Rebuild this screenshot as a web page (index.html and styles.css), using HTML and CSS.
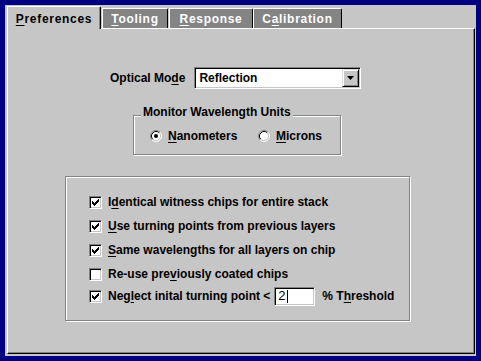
FILE: index.html
```html
<!DOCTYPE html>
<html lang="en">
<head>
    <meta charset="UTF-8">
    <meta name="viewport" content="width=device-width, initial-scale=1.0">
    <title>Preferences</title>
    <link rel="stylesheet" href="styles.css">
</head>
<body>
    <div class="window">
        <div class="tabs">
            <div class="tab active tab-pref"><u>P</u>references</div>
            <div class="tab tab-tool"><u>T</u>ooling</div>
            <div class="tab tab-resp"><u>R</u>esponse</div>
            <div class="tab tab-cal">C<u>a</u>libration</div>
        </div>

        <div class="panel">
            <div class="mode-row">
                <span class="mode-label">Optical Mo<u>d</u>e</span>
                <div class="select">
                    <span class="select-text">Reflection</span>
                    <span class="drop-btn">
                        <svg width="7" height="4" viewBox="0 0 7 4"><path d="M0 0h7L3.5 4z" fill="#000"/></svg>
                    </span>
                </div>
            </div>

            <div class="group units">
                <span class="legend">Monitor Wavelength Units</span>
                <div class="radio-row">
                    <div class="radio radio-nm">
                        <svg width="12" height="12" viewBox="0 0 12 12">
                            <circle cx="6" cy="6" r="5" fill="#fff"/>
                            <path d="M2.11 9.89A5.5 5.5 0 0 1 9.89 2.11" fill="none" stroke="#848484"/>
                            <path d="M9.89 2.11A5.5 5.5 0 0 1 2.11 9.89" fill="none" stroke="#fff"/>
                            <path d="M2.82 9.18A4.5 4.5 0 0 1 9.18 2.82" fill="none" stroke="#000"/>
                            <path d="M9.18 2.82A4.5 4.5 0 0 1 2.82 9.18" fill="none" stroke="#c6c6c6"/>
                            <circle cx="6" cy="6" r="2" fill="#000"/>
                        </svg>
                        <span><u>N</u>anometers</span>
                    </div>
                    <div class="radio">
                        <svg width="12" height="12" viewBox="0 0 12 12">
                            <circle cx="6" cy="6" r="5" fill="#fff"/>
                            <path d="M2.11 9.89A5.5 5.5 0 0 1 9.89 2.11" fill="none" stroke="#848484"/>
                            <path d="M9.89 2.11A5.5 5.5 0 0 1 2.11 9.89" fill="none" stroke="#fff"/>
                            <path d="M2.82 9.18A4.5 4.5 0 0 1 9.18 2.82" fill="none" stroke="#000"/>
                            <path d="M9.18 2.82A4.5 4.5 0 0 1 2.82 9.18" fill="none" stroke="#c6c6c6"/>
                        </svg>
                        <span><u>M</u>icrons</span>
                    </div>
                </div>
            </div>

            <div class="group options">
                <div class="check-row">
                    <span class="checkbox"><svg width="7" height="7" viewBox="0 0 7 7"><path d="M0 2h1v3H0zM1 3h1v3H1zM2 4h1v3H2zM3 3h1v3H3zM4 2h1v3H4zM5 1h1v3H5zM6 0h1v3H6z" fill="#000"/></svg></span>
                    <span>I<u>d</u>entical witness chips for entire stack</span>
                </div>
                <div class="check-row">
                    <span class="checkbox"><svg width="7" height="7" viewBox="0 0 7 7"><path d="M0 2h1v3H0zM1 3h1v3H1zM2 4h1v3H2zM3 3h1v3H3zM4 2h1v3H4zM5 1h1v3H5zM6 0h1v3H6z" fill="#000"/></svg></span>
                    <span><u>U</u>se turning points from previous layers</span>
                </div>
                <div class="check-row">
                    <span class="checkbox"><svg width="7" height="7" viewBox="0 0 7 7"><path d="M0 2h1v3H0zM1 3h1v3H1zM2 4h1v3H2zM3 3h1v3H3zM4 2h1v3H4zM5 1h1v3H5zM6 0h1v3H6z" fill="#000"/></svg></span>
                    <span><u>S</u>ame wavelengths for all layers on chip</span>
                </div>
                <div class="check-row">
                    <span class="checkbox"></span>
                    <span>Re-use pre<u>v</u>iously coated chips</span>
                </div>
                <div class="check-row row-last">
                    <span class="checkbox"><svg width="7" height="7" viewBox="0 0 7 7"><path d="M0 2h1v3H0zM1 3h1v3H1zM2 4h1v3H2zM3 3h1v3H3zM4 2h1v3H4zM5 1h1v3H5zM6 0h1v3H6z" fill="#000"/></svg></span>
                    <span>Neg<u>l</u>ect inital turning point &lt;</span>
                    <div class="textbox"><span class="value">2</span><span class="caret"></span></div>
                    <span class="threshold">% T<u>h</u>reshold</span>
                </div>
            </div>
        </div>
    </div>
</body>
</html>
```

FILE: styles.css
```css
* {
    margin: 0;
    padding: 0;
    box-sizing: border-box;
    font-family: 'Liberation Sans', Arial, sans-serif;
}

body {
    background-color: #000080;
    width: 481px;
    height: 361px;
    overflow: hidden;
    padding: 5px;
    font-size: 12px;
    font-weight: bold;
    color: #000;
}

u {
    text-underline-offset: 2px;
}

.window {
    width: 471px;
    height: 351px;
    background-color: #c6c6c6;
    padding: 1px 0 0 2px;
}

/* tabs */
.tabs {
    display: flex;
    align-items: flex-end;
    height: 22px;
}

.tab {
    height: 20px;
    padding-top: 3px;
    line-height: 14px;
    text-align: center;
    letter-spacing: 0.7px;
    white-space: nowrap;
    background-color: #848484;
    color: #fff;
    border-top: 1px solid #fff;
    border-left: 1px solid #fff;
    border-right: 1px solid #000;
    border-top-right-radius: 2px;
}

.tab.active {
    height: 23px;
    padding-top: 5px;
    margin-bottom: -1px;
    position: relative;
    z-index: 1;
    background-color: #c6c6c6;
    color: #000;
    box-shadow: inset -1px 0 0 #848484;
}

.tab-pref { width: 94px; }
.tab-tool { width: 66px; margin-left: 1px; }
.tab-resp { width: 84px; margin-left: 1px; }
.tab-cal { width: 89px; }

/* panel */
.panel {
    width: 468px;
    height: 326px;
    border-top: 1px solid #fff;
    border-left: 1px solid #fff;
    border-right: 1px solid #000;
    border-bottom: 1px solid #000;
    box-shadow: inset -1px -1px 0 #848484;
    padding-top: 38px;
}

.mode-row {
    display: flex;
    align-items: center;
    gap: 9px;
    margin-left: 102px;
    height: 22px;
}

.select {
    display: flex;
    align-items: center;
    width: 167px;
    height: 22px;
    padding: 1px;
    background-color: #fff;
    border: 1px solid;
    border-color: #848484 #fff #fff #848484;
    box-shadow: inset 1px 1px 0 #000, inset -1px -1px 0 #c6c6c6;
}

.select-text {
    flex: 1;
    padding-left: 3px;
    line-height: 14px;
}

.drop-btn {
    display: flex;
    align-items: center;
    justify-content: center;
    width: 17px;
    height: 18px;
    background-color: #c6c6c6;
    border: 1px solid;
    border-color: #dfdfdf #000 #000 #dfdfdf;
    box-shadow: inset 1px 1px 0 #fff, inset -1px -1px 0 #848484;
}

/* group boxes */
.group {
    border: 1px solid #848484;
    box-shadow: inset 1px 1px 0 #fff, 1px 1px 0 #fff;
}

.units {
    width: 208px;
    height: 40px;
    margin: 26px 0 0 125px;
}

.legend {
    display: block;
    width: fit-content;
    margin: -11px 0 0 7px;
    padding: 0 2px;
    line-height: 14px;
    background-color: #c6c6c6;
}

.radio-row {
    display: flex;
    align-items: center;
    height: 14px;
    margin: 10px 0 0 16px;
}

.radio {
    display: flex;
    align-items: center;
    gap: 6px;
    line-height: 14px;
}

.radio-nm {
    width: 108px;
}

.options {
    width: 345px;
    height: 145px;
    margin: 21px 0 0 57px;
    padding: 13px 0 0 23px;
}

.check-row {
    display: flex;
    align-items: center;
    height: 24px;
    line-height: 14px;
    white-space: nowrap;
}

.check-row .checkbox {
    margin-right: 6px;
}

.row-last {
    margin-top: -2px;
}

.checkbox {
    display: flex;
    align-items: center;
    justify-content: center;
    width: 13px;
    height: 13px;
    background-color: #fff;
    border: 1px solid;
    border-color: #848484 #fff #fff #848484;
    box-shadow: inset 1px 1px 0 #000, inset -1px -1px 0 #c6c6c6;
}

.textbox {
    display: flex;
    align-items: center;
    width: 41px;
    height: 19px;
    margin-left: 4px;
    padding-left: 3px;
    background-color: #fff;
    border: 1px solid;
    border-color: #848484 #fff #fff #848484;
    box-shadow: inset 1px 1px 0 #000, inset -1px -1px 0 #c6c6c6;
}

.value {
    font-weight: normal;
    font-size: 13px;
}

.caret {
    width: 1px;
    height: 13px;
    margin-left: 1px;
    background-color: #000;
}

.threshold {
    margin-left: 7px;
}
```
